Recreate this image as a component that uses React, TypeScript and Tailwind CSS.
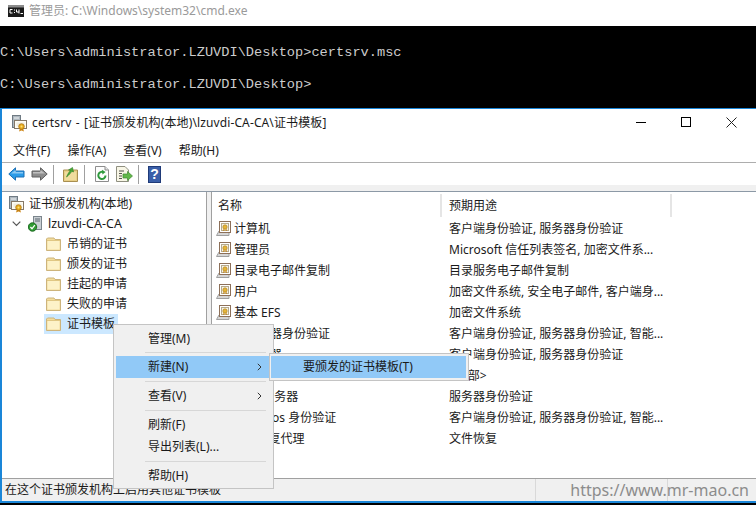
import React from "react";

const FONT = "[font-family:'Noto_Sans','Noto_Sans_CJK_SC',sans-serif]";

function Folder() {
  return (
    <svg width="15" height="14" viewBox="0 0 15 14" className="shrink-0">
      <path d="M0.5 2 L1.5 1 H8 L9 2.5 H14.5 V13.5 H0.5 Z" fill="#f3dc9b" stroke="#cdb47c" strokeWidth="1" />
      <path d="M1.5 4 H13.5 V12.5 H1.5 Z" fill="#fdf2c8" />
      <path d="M1 3.5 H14" stroke="#e0c783" strokeWidth="1" />
    </svg>
  );
}

function TemplateIcon() {
  return (
    <svg width="15" height="15" viewBox="0 0 15 15" className="shrink-0">
      <path d="M0.5 14.5 L3 10 H13 V14.5 Z" fill="#d6d6d6" stroke="#a0a0a0" />
      <rect x="3.5" y="0.5" width="11" height="11" fill="#fff" stroke="#8d7059" />
      <rect x="5.5" y="2.5" width="7" height="7" fill="#f6f2e6" stroke="#b5a98c" />
      <circle cx="9" cy="6" r="2.2" fill="#e5b53a" stroke="#a87a18" strokeWidth="0.6" />
      <path d="M8 8 L7.6 10 M10 8 L10.4 10" stroke="#c98a1c" />
    </svg>
  );
}

function CertSrvIcon() {
  return (
    <svg width="16" height="17" viewBox="0 0 16 17" className="shrink-0">
      <rect x="0.5" y="0.5" width="8" height="12" fill="#aeb8c0" stroke="#6f7a83" />
      <path d="M2 3 H7" stroke="#eef1f3" />
      <rect x="2.5" y="5.5" width="12" height="8" fill="#fdfcf4" stroke="#857868" />
      <rect x="4.5" y="7.5" width="8" height="4" fill="#f0ece0" />
      <path d="M8 13 L7 16.5 L9.5 15.5 L12 16.5 L11 13 Z" fill="#d08a1e" />
      <circle cx="9.5" cy="11.5" r="2.8" fill="#e8ac1e" stroke="#a86f10" strokeWidth="0.7" />
      <circle cx="9.5" cy="11.5" r="1" fill="#fbe27a" />
    </svg>
  );
}

function CmdIcon() {
  return (
    <svg width="16" height="12" viewBox="0 0 16 12" className="shrink-0">
      <rect x="0" y="0" width="16" height="12" fill="#1a1a1a" />
      <rect x="0" y="0" width="16" height="2.5" fill="#8c8c8c" />
      <path d="M2 4.5 H4.5 M2 4.5 V8 H4.5 M6 5 h1 M6 7.5 h1 M8.5 4.5 V7 H11 M11 4.5 V8.5 M12.5 8.5 H15" stroke="#fff" strokeWidth="1" fill="none" />
    </svg>
  );
}

function ServerIcon() {
  return (
    <svg width="14" height="16" viewBox="0 0 14 16" className="shrink-0">
      <rect x="5.5" y="0.5" width="8" height="13" fill="#c9cfd4" stroke="#7b858c" />
      <path d="M7 3 H12 M7 5 H12" stroke="#5b666e" />
      <circle cx="4.5" cy="11" r="4.2" fill="#2f9b33" stroke="#1e6a22" />
      <path d="M2.4 11 L4 12.8 L6.8 9.2" stroke="#fff" strokeWidth="1.3" fill="none" />
    </svg>
  );
}

function Arrow({ dir, color, stroke }: { dir: "l" | "r"; color: string; stroke: string }) {
  return (
    <svg width="17" height="14" viewBox="0 0 17 14" style={{ transform: dir === "r" ? "scaleX(-1)" : undefined }}>
      <path d="M0.8 7 L7.5 0.8 V4 H16 V10 H7.5 V13.2 Z" fill={color} stroke={stroke} strokeWidth="1" strokeLinejoin="round" />
      <path d="M3 6.5 L7.8 2.8 V5 H15 V6.5 Z" fill="#fff" opacity="0.45" />
    </svg>
  );
}

function UpIcon() {
  return (
    <svg width="15" height="15" viewBox="0 0 15 15">
      <path d="M0.5 3 H14.5 V14.5 H0.5 Z" fill="#e8cf86" stroke="#a98f50" />
      <path d="M2 5 H13 V13 H2 Z" fill="#f0dc9e" />
      <path d="M3.5 10 C5 6.5 6 5 7.5 3.5 L5.5 3 L9.5 0.5 L10.5 5 L8.8 4.3 C7.8 6 6 8 3.5 10 Z" fill="#48a838" stroke="#2c7d22" strokeWidth="0.6" />
    </svg>
  );
}

function RefreshIcon() {
  return (
    <svg width="14" height="16" viewBox="0 0 14 16">
      <path d="M0.5 0.5 H10 L13.5 4 V15.5 H0.5 Z" fill="#fdfdfd" stroke="#8d8d8d" />
      <path d="M10 0.5 V4 H13.5" fill="#e4e4e4" stroke="#8d8d8d" />
      <path d="M10.5 9.5 A3.6 3.6 0 1 1 8.5 6.2" fill="none" stroke="#2f9a3d" strokeWidth="2" />
      <path d="M7 3.8 L10.6 6 L7.4 8.4 Z" fill="#2f9a3d" />
    </svg>
  );
}

function ExportIcon() {
  return (
    <svg width="17" height="16" viewBox="0 0 17 16">
      <path d="M0.5 0.5 H9 L12.5 4 V15.5 H0.5 Z" fill="#f8f6e6" stroke="#8f8f80" />
      <path d="M3 5 H8 M3 7.5 H6 M3 10 H6 M3 12.5 H6" stroke="#55554d" />
      <path d="M7 8 H11.5 V5.5 L16.5 10 L11.5 14.5 V12 H7 Z" fill="#62b84a" stroke="#3f8a30" strokeWidth="0.7" />
    </svg>
  );
}

function HelpIcon() {
  return (
    <div className="w-[13px] h-[17px] bg-[#3a5fa8] border border-[#1f3a78] flex items-center justify-center text-white text-[14px] leading-none font-bold [font-family:'Liberation_Sans',sans-serif]">
      ?
    </div>
  );
}

function Chevron() {
  return (
    <svg width="5" height="8" viewBox="0 0 5 8" className="shrink-0">
      <path d="M0.8 0.8 L4 4 L0.8 7.2" fill="none" stroke="#333" strokeWidth="1" />
    </svg>
  );
}

const rows: [string, string][] = [
  ["计算机", "客户端身份验证, 服务器身份验证"],
  ["管理员", "Microsoft 信任列表签名, 加密文件系..."],
  ["目录电子邮件复制", "目录服务电子邮件复制"],
  ["用户", "加密文件系统, 安全电子邮件, 客户端身..."],
  ["基本 EFS", "加密文件系统"],
  ["域控制器身份验证", "客户端身份验证, 服务器身份验证, 智能..."],
  ["域控制器", "客户端身份验证, 服务器身份验证"],
  ["从属证书颁发机构", "<全部>"],
  ["Web 服务器", "服务器身份验证"],
  ["Kerberos 身份验证", "客户端身份验证, 服务器身份验证, 智能..."],
  ["EFS 恢复代理", "文件恢复"],
];

const tree = ["吊销的证书", "颁发的证书", "挂起的申请", "失败的申请", "证书模板"];

function MenuSep({ top = 3 }: { top?: number }) {
  return <div className="h-px bg-[#d7d7d7] ml-[29px] mr-[3px] mb-[3px]" style={{ marginTop: top }} />;
}

function MenuItem({ label, active, arrow }: { label: string; active?: boolean; arrow?: boolean }) {
  return (
    <div className={`h-[22px] shrink-0 flex items-center justify-between pl-[32px] pr-[7px] ${active ? "bg-[#91c9f7]" : ""}`}>
      <span>{label}</span>
      {arrow && <Chevron />}
    </div>
  );
}

export default function App() {
  return (
    <div className={`w-[756px] h-[505px] overflow-hidden flex flex-col bg-black text-[12px] text-[#1a1a1a] ${FONT}`}>
      <div className="h-[26px] shrink-0 bg-white flex items-center pl-[8px] gap-[5px] pb-[5px]">
        <CmdIcon />
        <span className="text-[#9a9a9a] text-[12px]">管理员: C:\Windows\system32\cmd.exe</span>
      </div>

      <div className="h-[82px] shrink-0 bg-black text-[#cccccc] text-[13.67px] [font-family:'Liberation_Mono',monospace] leading-[32px] pt-[11px] whitespace-pre">
        <div>C:\Users\administrator.LZUVDI\Desktop&gt;certsrv.msc</div>
        <div>C:\Users\administrator.LZUVDI\Desktop&gt;</div>
      </div>

      <div className="relative w-[756px] h-[395px] shrink-0 flex flex-col bg-[#f0f0f0] border-t border-l-[2px] border-b-[2px] border-[#1a86d8] border-r-0">
        <div className="h-[26px] shrink-0 bg-white flex items-center pl-[10px] pt-[2px]">
          <CertSrvIcon />
          <span className="ml-[4px] text-[12px] whitespace-pre tracking-[0.12px] [word-spacing:1px]">certsrv - [证书颁发机构(本地)\lzuvdi-CA-CA\证书模板]</span>
          <div className="ml-auto flex items-center gap-[35px] pr-[19px] pb-[2px]">
            <div className="w-[10px] h-px bg-black" />
            <div className="w-[10px] h-[10px] border border-black" />
            <svg width="11" height="11" viewBox="0 0 11 11">
              <path d="M0.5 0.5 L10.5 10.5 M10.5 0.5 L0.5 10.5" stroke="#222" strokeWidth="1" />
            </svg>
          </div>
        </div>

        <div className="h-[28px] shrink-0 bg-white border-b border-[#adadad] flex items-center pl-[11px] pt-[5px] gap-[17px]">
          <span>文件(F)</span>
          <span>操作(A)</span>
          <span>查看(V)</span>
          <span>帮助(H)</span>
        </div>

        <div className="h-[22px] shrink-0 bg-white flex items-center pl-[6px]">
          <Arrow dir="l" color="#2a9be8" stroke="#1d6fb3" />
          <div className="w-[6px]" />
          <Arrow dir="r" color="#8d8d8d" stroke="#5f5f5f" />
          <div className="w-px h-[19px] bg-[#a0a0a0] ml-[5px] mr-[9px]" />
          <UpIcon />
          <div className="w-px h-[19px] bg-[#a0a0a0] ml-[6px] mr-[10px]" />
          <RefreshIcon />
          <div className="w-[7px]" />
          <ExportIcon />
          <div className="w-px h-[19px] bg-[#a0a0a0] ml-[5px] mr-[9px]" />
          <HelpIcon />
        </div>

        <div className="h-[7px] shrink-0 bg-[#f0f0f0] border-b border-[#8c99a6]" />

        <div className="flex-1 min-h-0 flex bg-[#f0f0f0]">
          <div className="w-[205px] shrink-0 bg-white border-r border-[#a0a0a0] pl-[5px] pt-[2px]">
            <div className="flex items-center h-[20px] gap-[4px] pl-[2px]">
              <CertSrvIcon />
              <span>证书颁发机构(本地)</span>
            </div>
            <div className="flex items-center h-[20px] pl-[5px]">
              <svg width="9" height="6" viewBox="0 0 9 6" className="shrink-0">
                <path d="M0.7 0.7 L4.5 4.5 L8.3 0.7" fill="none" stroke="#555" strokeWidth="1.2" />
              </svg>
              <div className="w-[7px]" />
              <ServerIcon />
              <span className="ml-[6px] text-[12.5px]">lzuvdi-CA-CA</span>
            </div>
            {tree.map((t, i) => (
              <div key={t} className="flex h-[20px] pl-[37px]">
                <div className={`flex items-center gap-[6px] pl-[2px] pr-[3px] ${i === 4 ? "bg-[#cce8ff]" : ""}`}>
                  <Folder />
                  <span>{t}</span>
                </div>
              </div>
            ))}
          </div>

          <div className="w-[4px] shrink-0" />

          <div className="flex-1 min-w-0 bg-white border-l border-[#a0a0a0] relative">
            <div className="flex h-[25px] pt-[2px]">
              <div className="w-[230px] pl-[6px] flex items-center border-r-[2px] border-[#e5e5e5] text-[12px]">名称</div>
              <div className="w-[230px] pl-[7px] flex items-center border-r-[2px] border-[#e5e5e5]">预期用途</div>
            </div>
            <div className="pt-[1px]">
              {rows.map(([a, b]) => (
                <div key={a} className="flex h-[21px] items-center">
                  <div className="w-[230px] pl-[4px] flex items-center gap-[3px]">
                    <TemplateIcon />
                    <span className="whitespace-pre">{a}</span>
                  </div>
                  <div className="pl-[7px] whitespace-pre">{b}</div>
                </div>
              ))}
            </div>
          </div>
        </div>

        <div className="h-[23px] shrink-0 bg-[#f0f0f0] border-t border-[#a0a0a0] flex items-center pl-[3px] relative">
          <span>在这个证书颁发机构上启用其他证书模板</span>
          <div className="ml-auto flex h-full">
            <div className="w-[132px] border-l border-[#d9d9d9]" />
            <div className="w-[89px] border-l border-[#d9d9d9]" />
          </div>
          <span className="absolute right-[7px] top-0 text-[#8c8c8c] text-[16px] leading-[22px] [font-family:'Noto_Sans',sans-serif] whitespace-pre">
            https://www.mr-mao.cn
          </span>
        </div>

        <div className="absolute left-[111px] top-[215px] w-[161px] h-[165px] bg-[#f0f0f0] border border-[#c4c4c4] pl-[2px] pr-[4px] pt-[3px] flex flex-col">
          <MenuItem label="管理(M)" />
          <MenuSep top={2} />
          <MenuItem label="新建(N)" active arrow />
          <MenuSep />
          <MenuItem label="查看(V)" arrow />
          <MenuSep />
          <MenuItem label="刷新(F)" />
          <MenuItem label="导出列表(L)..." />
          <MenuSep />
          <MenuItem label="帮助(H)" />
        </div>

        <div className="absolute left-[267px] top-[244px] w-[200px] h-[28px] bg-[#f0f0f0] border border-[#c4c4c4] pl-[1px] pr-[2px] py-[2px]">
          <div className="h-full bg-[#91c9f7] flex items-center pl-[32px]">要颁发的证书模板(T)</div>
        </div>
      </div>
    </div>
  );
}
